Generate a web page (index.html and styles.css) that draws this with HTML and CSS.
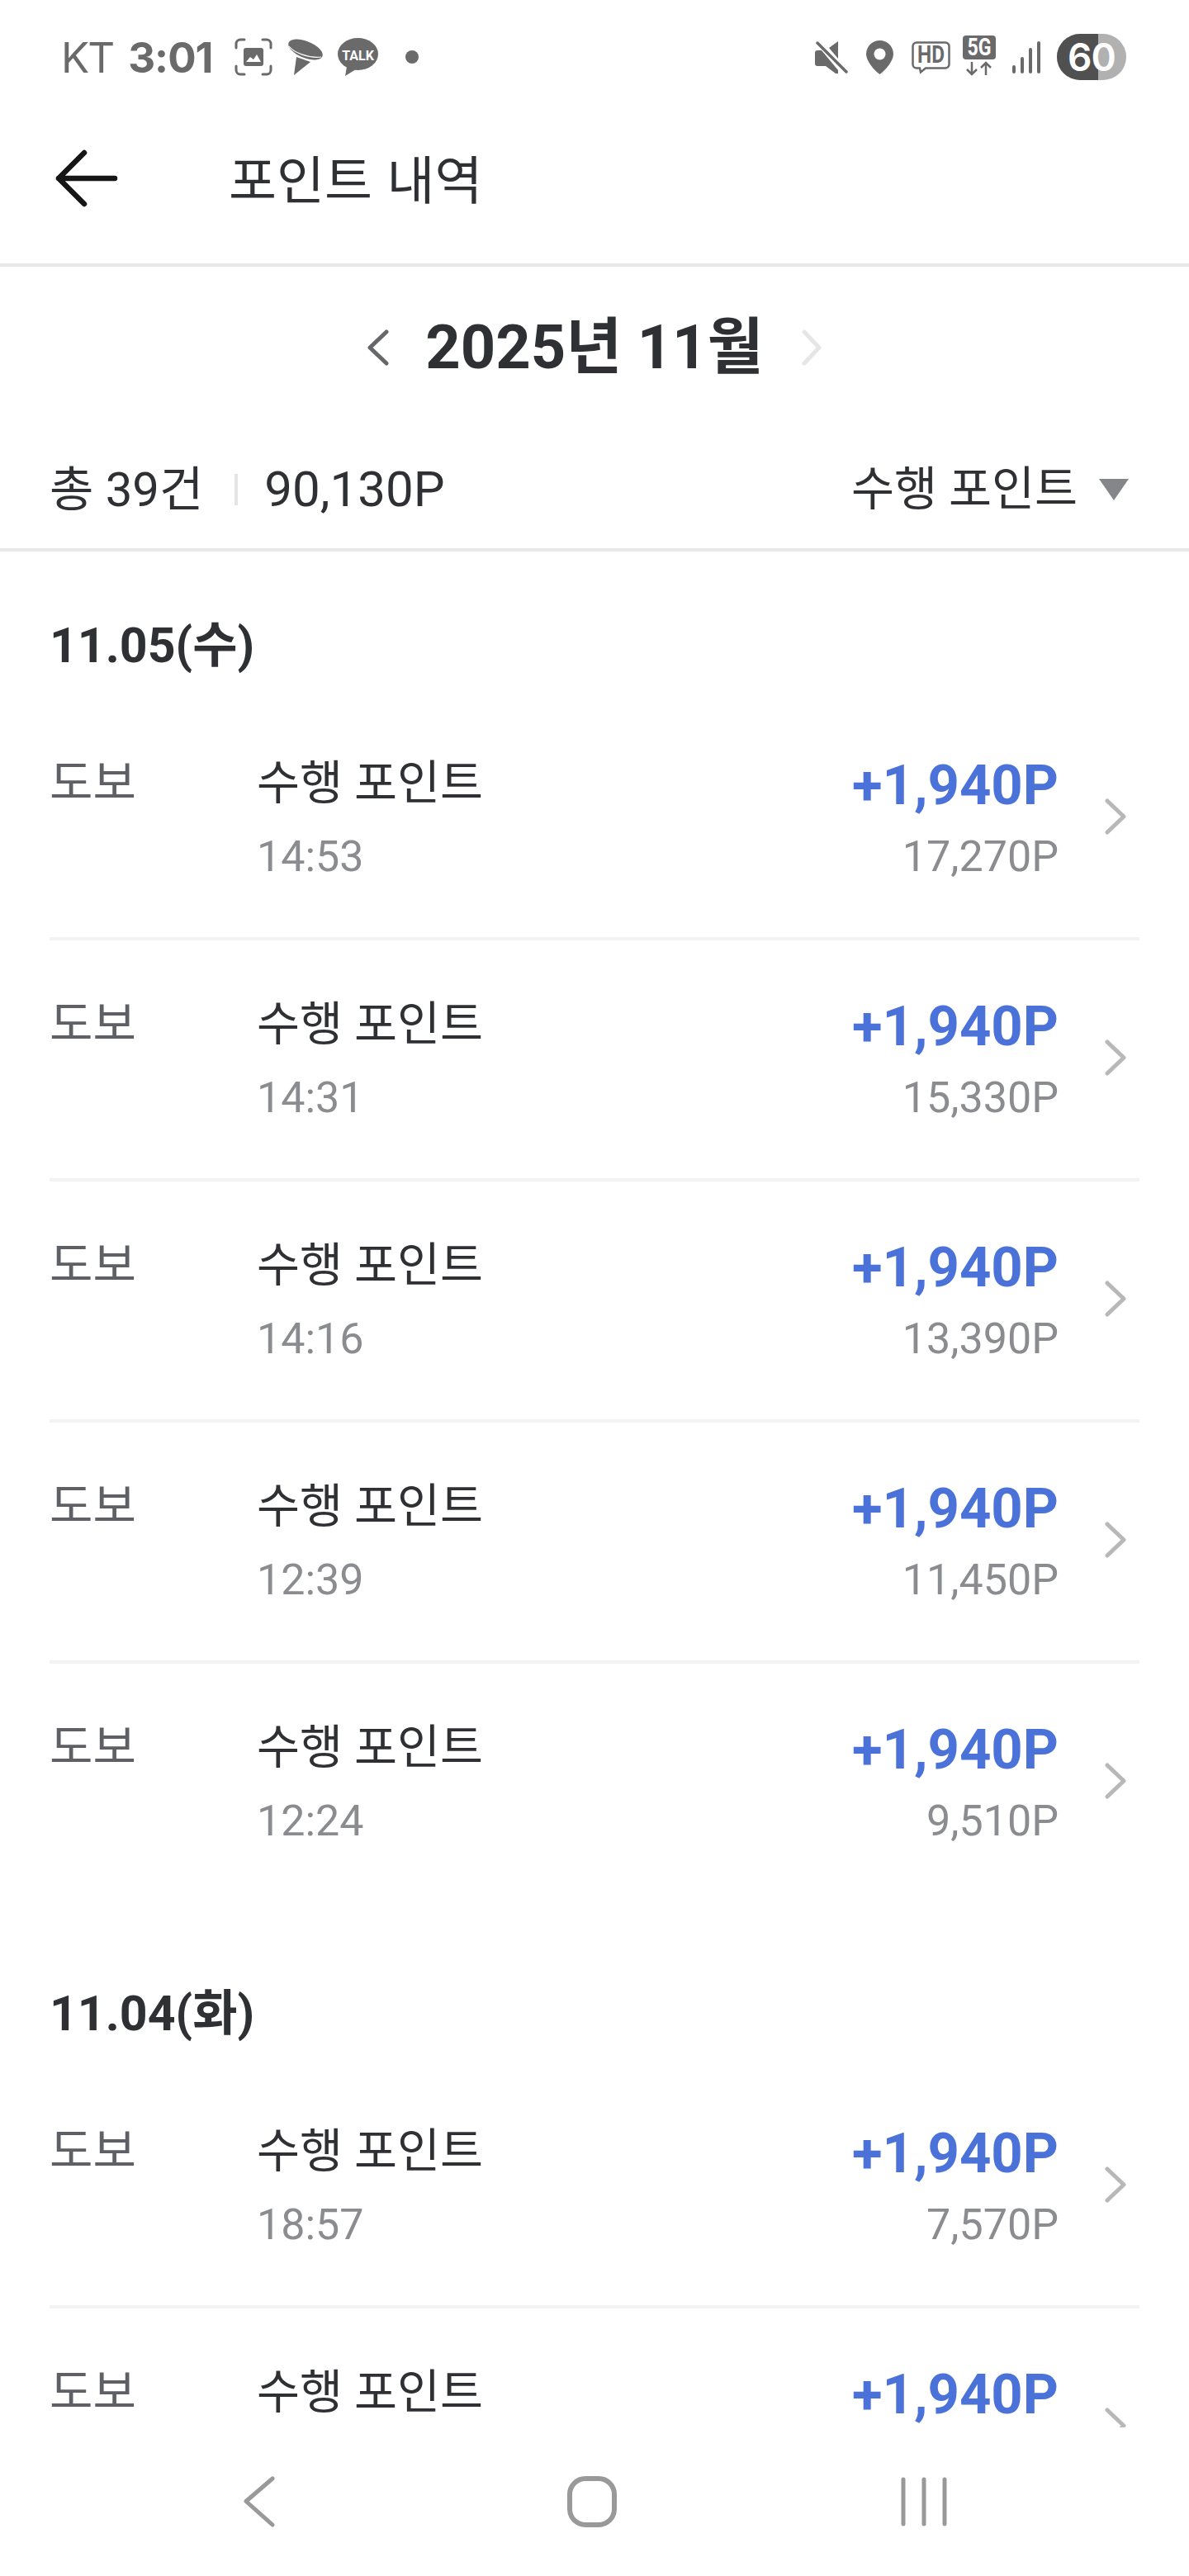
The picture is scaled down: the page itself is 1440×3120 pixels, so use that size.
FILE: index.html
```html
<!DOCTYPE html>
<html lang="ko">
<head>
<meta charset="utf-8">
<title>포인트 내역</title>
<link rel="stylesheet" href="styles.css">
</head>
<body>
<div class="screen">
  <div class="status">
    <div class="status-left">
      <span class="carrier">KT</span><span class="clock">3:01</span>
      <svg class="ic-shot" viewBox="0 0 46 46"><path d="M2 12V7a5 5 0 0 1 5-5h5M34 2h5a5 5 0 0 1 5 5v5M44 34v5a5 5 0 0 1-5 5h-5M12 44H7a5 5 0 0 1-5-5v-5" fill="none" stroke="#6a6a6a" stroke-width="3" stroke-linecap="round"/><rect x="11" y="12" width="24" height="22" rx="3" fill="#6a6a6a"/><path d="M14 29l5-6 4 3 4-6 5 9z" fill="#fff"/></svg>
      <svg class="ic-pin" viewBox="0 0 42 44"><ellipse cx="21" cy="13" rx="22" ry="10" transform="rotate(22 21 13)" fill="#6a6a6a"/><path d="M10 22l17 6-20 16z" fill="#6a6a6a"/><path d="M1 9c5 7 23 15 39 13" fill="none" stroke="#fff" stroke-width="1.200"/></svg>
      <svg class="ic-talk" viewBox="0 0 49 46"><ellipse cx="24.500" cy="19.500" rx="24.500" ry="19.500" fill="#6a6a6a"/><path d="M11 35l-2 11 13-8z" fill="#6a6a6a"/><text x="24.500" y="27" class="talk-text" text-anchor="middle">TALK</text></svg>
      <span class="dot"></span>
    </div>
    <div class="status-right">
      <svg class="ic-mute" viewBox="0 0 40 39"><path d="M0 14a3 3 0 0 1 3-3h5l20 24v4h-3l-12-9H3a3 3 0 0 1-3-3zM28 0v21L17 8z" fill="#6a6a6a"/><path d="M3 2l35 35" stroke="#fff" stroke-width="5"/><path d="M3 2l35 35" stroke="#6a6a6a" stroke-width="3.500" stroke-linecap="round"/></svg>
      <svg class="ic-loc" viewBox="0 0 33 41"><path d="M16.500 0A16.500 16.500 0 0 1 33 16.500c0 8-9 19-16.500 24.500C9 35.500 0 24.500 0 16.500A16.500 16.500 0 0 1 16.500 0z" fill="#6a6a6a"/><circle cx="16.500" cy="16.500" r="7" fill="#fff"/></svg>
      <svg class="ic-hd" viewBox="0 0 47 39"><path d="M6 1.500h35a4.500 4.500 0 0 1 4.500 4.500v22a4.500 4.500 0 0 1-4.500 4.500H17l-6 5-1-5H6A4.500 4.500 0 0 1 1.500 28V6A4.500 4.500 0 0 1 6 1.500z" fill="none" stroke="#6a6a6a" stroke-width="2.500"/><text x="23.500" y="26" class="hd-text" text-anchor="middle" textLength="33" lengthAdjust="spacingAndGlyphs">HD</text></svg>
      <svg class="ic-5g" viewBox="0 0 40 49"><rect width="40" height="29" rx="4" fill="#6a6a6a"/><text x="20" y="24" class="fiveg-text" text-anchor="middle" textLength="29" lengthAdjust="spacingAndGlyphs">5G</text><path d="M11 32v15M5 41l6 6 6-6M28 48V33M22 39l6-6 6 6" fill="none" stroke="#6a6a6a" stroke-width="2.500"/></svg>
      <svg class="ic-sig" viewBox="0 0 36 39"><path d="M3 31v6M13 21v16M23 10v27M33 2v35" stroke="#6a6a6a" stroke-width="4" stroke-linecap="round"/></svg>
      <div class="batt"><span class="batt-fill"></span><span class="batt-num">60</span></div>
    </div>
  </div>

  <header class="topbar">
    <svg class="back" viewBox="0 0 78 72"><path d="M36 5L5 36l31 31M5 36h68" fill="none" stroke="#161616" stroke-width="6.500" stroke-linecap="round" stroke-linejoin="round"/></svg>
    <h1 class="title">포인트 내역</h1>
  </header>

  <div class="month">
    <svg class="chev-m" viewBox="0 0 26 44"><path d="M23 3L3 22l20 19" fill="none" stroke="#66676b" stroke-width="5" stroke-linecap="round" stroke-linejoin="round"/></svg>
    <span class="month-text">2025년 11월</span>
    <svg class="chev-m" viewBox="0 0 26 44"><path d="M5 3l18 19L5 41" fill="none" stroke="#e6e6e6" stroke-width="5" stroke-linecap="round" stroke-linejoin="round"/></svg>
  </div>

  <div class="summary">
    <div class="summary-left"><span class="count">총 39건</span><i class="vsep"></i><span>90,130P</span></div>
    <div class="filter"><span>수행 포인트</span><i class="tri"></i></div>
  </div>

  <main class="list">
    <section class="day">
      <h2 class="date">11.05(수)</h2>
      <div class="row"><span class="kind">도보</span><div class="info"><p class="name">수행 포인트</p><p class="time">14:53</p></div><div class="amt"><p class="plus">+1,940P</p><p class="bal">17,270P</p></div><svg class="chev" viewBox="0 0 26 44"><path d="M3 3l20 19L3 41" /></svg></div>
      <div class="row"><span class="kind">도보</span><div class="info"><p class="name">수행 포인트</p><p class="time">14:31</p></div><div class="amt"><p class="plus">+1,940P</p><p class="bal">15,330P</p></div><svg class="chev" viewBox="0 0 26 44"><path d="M3 3l20 19L3 41" /></svg></div>
      <div class="row"><span class="kind">도보</span><div class="info"><p class="name">수행 포인트</p><p class="time">14:16</p></div><div class="amt"><p class="plus">+1,940P</p><p class="bal">13,390P</p></div><svg class="chev" viewBox="0 0 26 44"><path d="M3 3l20 19L3 41" /></svg></div>
      <div class="row"><span class="kind">도보</span><div class="info"><p class="name">수행 포인트</p><p class="time">12:39</p></div><div class="amt"><p class="plus">+1,940P</p><p class="bal">11,450P</p></div><svg class="chev" viewBox="0 0 26 44"><path d="M3 3l20 19L3 41" /></svg></div>
      <div class="row last"><span class="kind">도보</span><div class="info"><p class="name">수행 포인트</p><p class="time">12:24</p></div><div class="amt"><p class="plus">+1,940P</p><p class="bal">9,510P</p></div><svg class="chev" viewBox="0 0 26 44"><path d="M3 3l20 19L3 41" /></svg></div>
    </section>
    <section class="day">
      <h2 class="date">11.04(화)</h2>
      <div class="row"><span class="kind">도보</span><div class="info"><p class="name">수행 포인트</p><p class="time">18:57</p></div><div class="amt"><p class="plus">+1,940P</p><p class="bal">7,570P</p></div><svg class="chev" viewBox="0 0 26 44"><path d="M3 3l20 19L3 41" /></svg></div>
      <div class="row"><span class="kind">도보</span><div class="info"><p class="name">수행 포인트</p></div><div class="amt"><p class="plus">+1,940P</p></div><svg class="chev" viewBox="0 0 26 44"><path d="M3 3l20 19L3 41" /></svg></div>
    </section>
  </main>

  <nav class="navbar">
    <svg class="nav-back" viewBox="0 0 40 62"><path d="M36 3L4 30.500 36 59" fill="none" stroke="#999" stroke-width="5" stroke-linecap="round" stroke-linejoin="round"/></svg>
    <svg class="nav-home" viewBox="0 0 60 62"><rect x="3" y="3" width="54" height="56" rx="19" fill="none" stroke="#999" stroke-width="6"/></svg>
    <svg class="nav-recent" viewBox="0 0 56 60"><path d="M3 3v54M28 3v54M53 3v54" fill="none" stroke="#999" stroke-width="5" stroke-linecap="round"/></svg>
  </nav>
</div>
</body>
</html>
```

FILE: styles.css
```css
* { box-sizing: border-box; }
html, body { margin: 0; padding: 0; background: #fff; }
body { font-family: Roboto, "Noto Sans CJK KR", sans-serif; color: #2f3034; }
p, h1, h2 { margin: 0; font-weight: 400; }
.screen { position: relative; width: 1440px; height: 3120px; overflow: hidden; background: #fff; }

.status { height: 138px; display: flex; justify-content: space-between; align-items: center; padding: 0 76px 0 74px; color: #6a6a6a; }
.status-left, .status-right { display: flex; align-items: center; }
.carrier { font: 400 51px/1 Inter, Roboto, sans-serif; letter-spacing: -2px; margin-right: 18px; }
.clock { font: 700 51px/1 Inter, Roboto, sans-serif; letter-spacing: -1px; margin-right: 26px; }
.ic-shot { width: 46px; height: 46px; margin-right: 19px; }
.ic-pin { width: 42px; height: 44px; margin-right: 18px; }
.ic-talk { width: 49px; height: 46px; margin-right: 33px; }
.talk-text { font: 700 16px Roboto, sans-serif; fill: #fff; }
.dot { width: 16px; height: 16px; border-radius: 50%; background: #6a6a6a; }
.ic-mute { width: 40px; height: 39px; margin-right: 22px; }
.ic-loc { width: 33px; height: 41px; margin-right: 22px; }
.ic-hd { width: 47px; height: 39px; margin-right: 15px; overflow: visible; }
.hd-text { font: 700 30px Roboto, sans-serif; fill: #6a6a6a; }
.ic-5g { width: 40px; height: 49px; margin-right: 19px; margin-top: -3px; overflow: visible; }
.fiveg-text { font: 700 29px Roboto, sans-serif; fill: #fff; }
.ic-sig { width: 36px; height: 39px; margin-right: 19px; }
.batt { position: relative; width: 84px; height: 56px; border-radius: 28px; overflow: hidden; background: #b1b1b1; display: flex; align-items: center; justify-content: center; }
.batt-fill { position: absolute; left: 0; top: 0; bottom: 0; width: 50px; background: #505050; }
.batt-num { position: relative; font: 600 46px/1 Inter, Roboto, sans-serif; color: #fff; letter-spacing: -1px; }

.topbar { height: 185px; display: flex; align-items: center; padding: 0 0 25px 66px; border-bottom: 4px solid #e8e8e8; }
.back { width: 78px; height: 72px; margin-right: 133px; }
.title { font: 400 63px/1 "Noto Sans CJK KR", sans-serif; color: #2f3034; margin-bottom: 6px; }

.month { height: 196px; display: flex; align-items: center; justify-content: center; gap: 44px; }
.chev-m { width: 26px; height: 44px; }
.month-text { font: 700 74px/74px Roboto, "Noto Sans CJK KR", sans-serif; color: #2f3034; }

.summary { height: 149px; display: flex; justify-content: space-between; align-items: flex-start; padding: 40px 73px 0 60px; border-bottom: 4px solid #e8e8e8; font-size: 60px; line-height: 68px; }
.summary-left { display: flex; align-items: center; }
.count { font-size: 58px; }
.vsep { width: 4px; height: 38px; background: #e4e4e4; margin: 0 32px 0 38px; }
.filter { display: flex; align-items: center; font-size: 56.500px; }
.tri { width: 36px; height: 26px; margin-left: 26px; background: #85868a; clip-path: polygon(0 0, 100% 0, 50% 100%); }

.list { padding: 0 60px; }
.day { padding-bottom: 18px; }
.date { font: 700 59px/68px Roboto, "Noto Sans CJK KR", sans-serif; color: #2f3034; padding-top: 80px; height: 179px; }
.row { height: 292px; display: flex; align-items: flex-start; border-bottom: 4px solid #f3f3f3; padding: 70px 16px 0 0; }
.row.last { border-bottom: 0; }
.kind { width: 251px; font-size: 57px; line-height: 64px; color: #5f6065; }
.info { flex: 1; }
.name { font-size: 56.500px; line-height: 64px; color: #2f3034; }
.time { font-size: 52px; line-height: 56px; color: #8b8c90; margin-top: 29px; }
.amt { text-align: right; width: 400px; margin-right: 56px; }
.plus { font-size: 67px; font-weight: 700; line-height: 68px; color: #4a72d8; }
.bal { font-size: 52px; line-height: 56px; color: #8b8c90; margin-top: 25px; }
.chev { width: 26px; height: 44px; margin-top: 50px; fill: none; stroke: #b8b8b8; stroke-width: 5; stroke-linecap: round; stroke-linejoin: round; }

.navbar { position: absolute; left: 0; right: 0; bottom: 0; height: 180px; background: #fff; display: flex; align-items: center; padding-left: 294px; }
.nav-back { width: 40px; height: 62px; margin-right: 353px; }
.nav-home { width: 60px; height: 62px; margin-right: 344px; }
.nav-recent { width: 56px; height: 60px; }
```
